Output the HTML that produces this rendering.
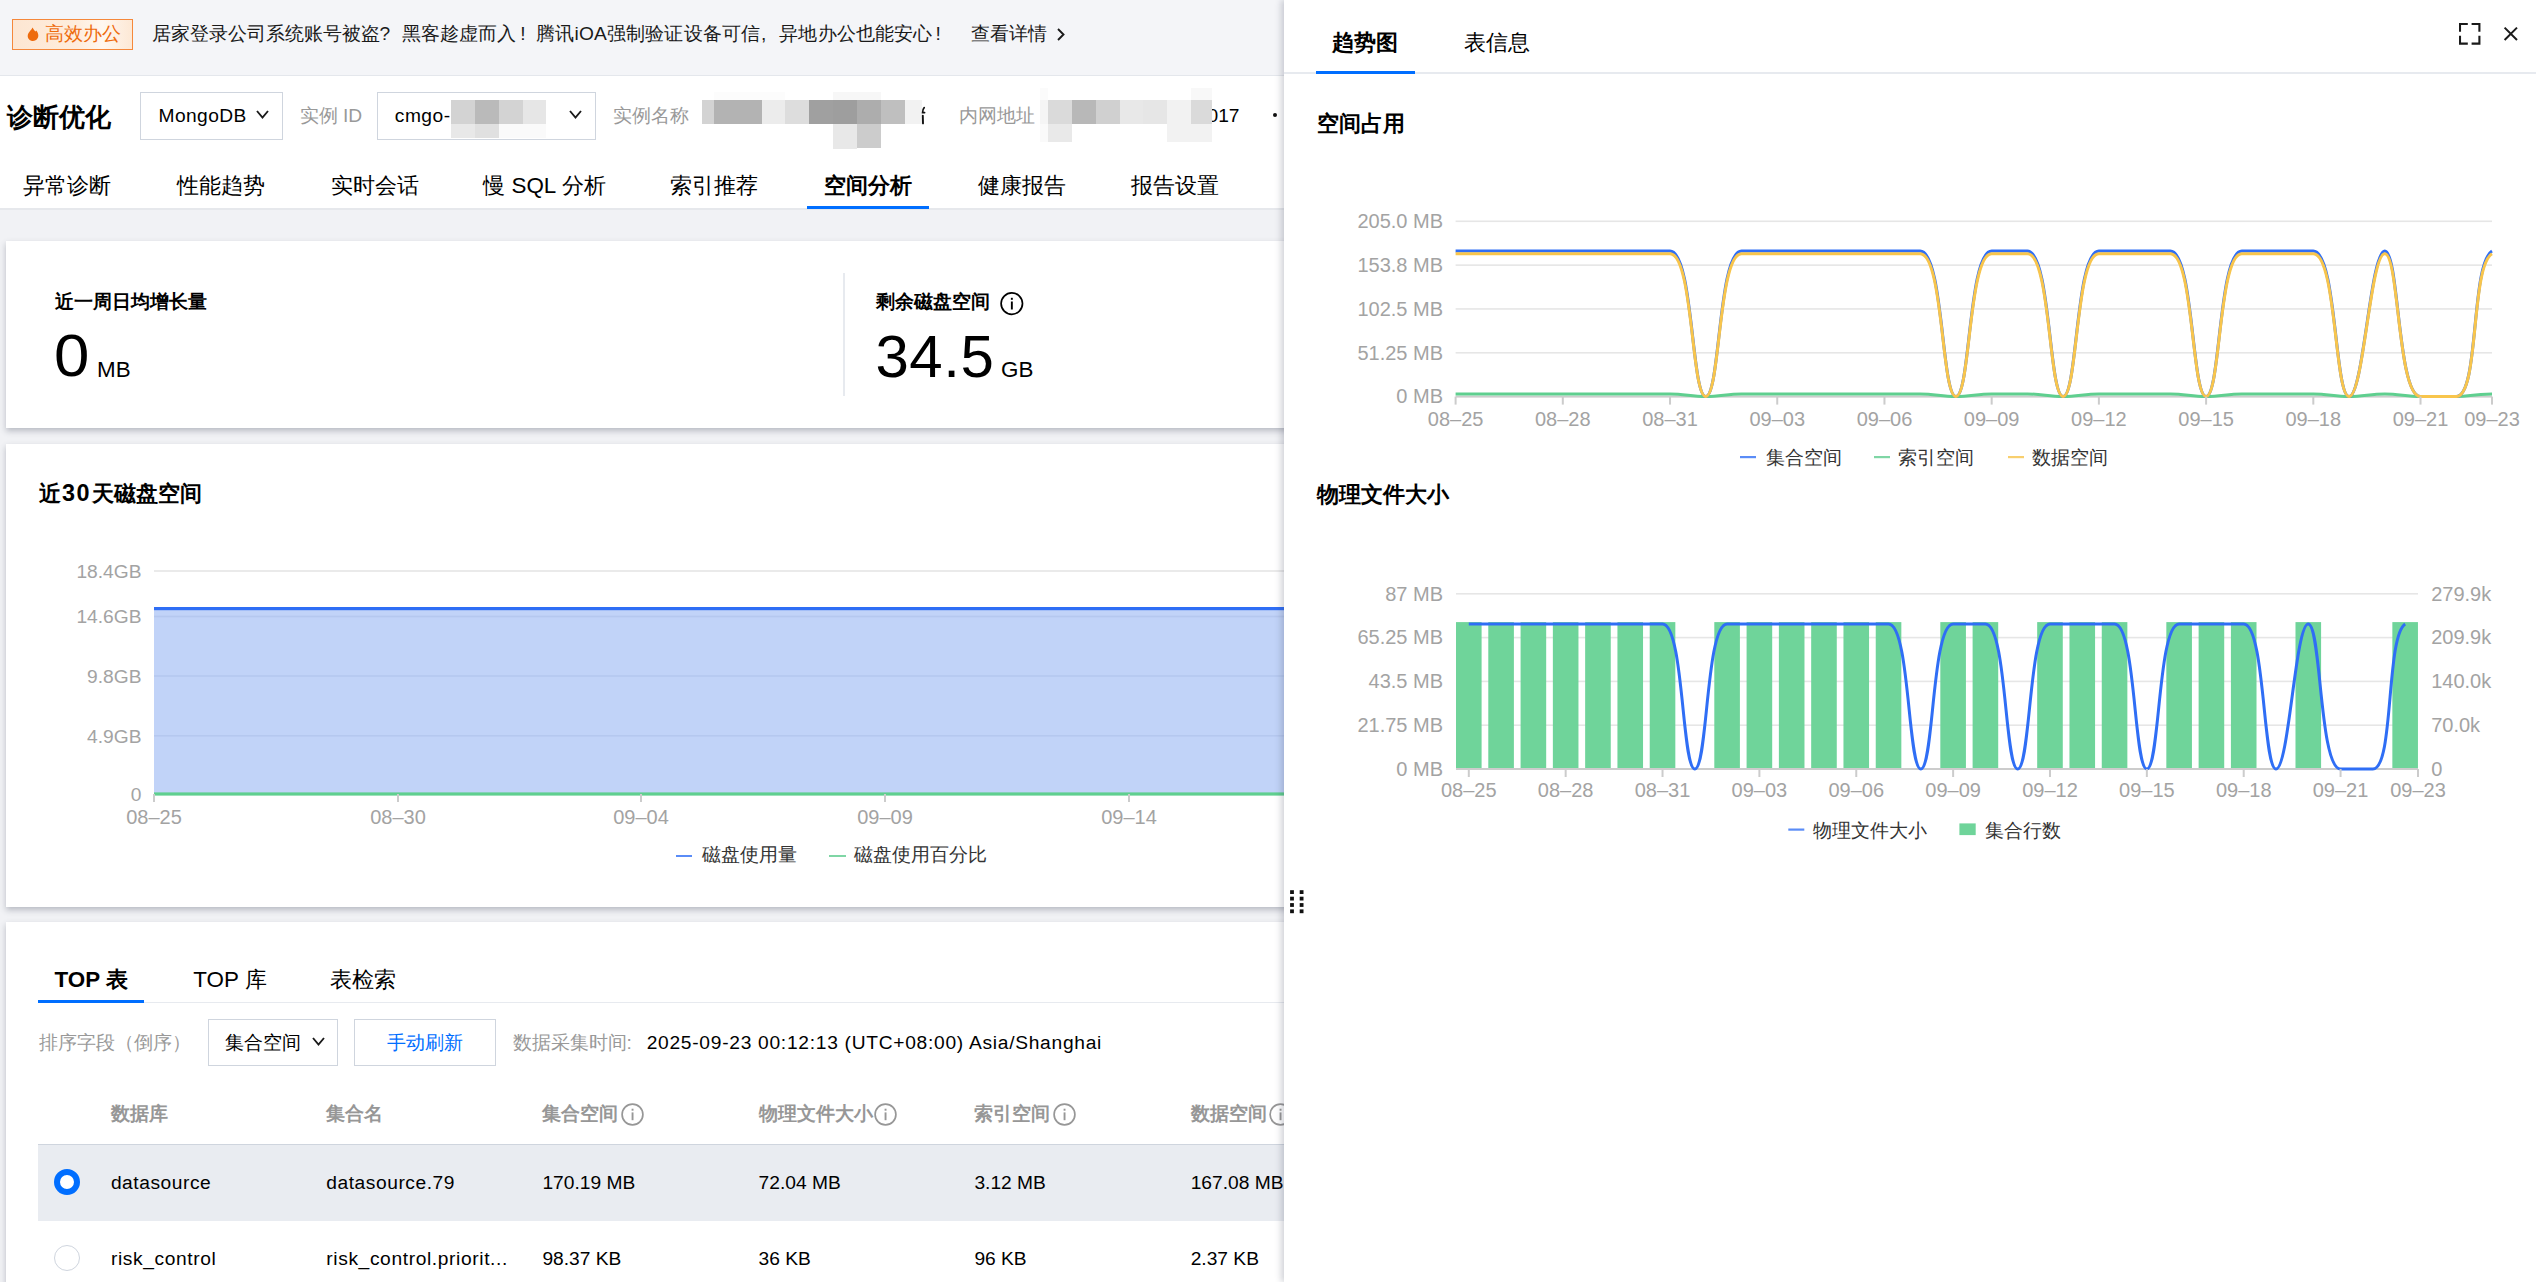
<!DOCTYPE html>
<html><head><meta charset="utf-8"><title>诊断优化</title>
<style>
html,body{margin:0;padding:0;width:2536px;height:1282px;overflow:hidden;background:#fff;font-family:"Liberation Sans", sans-serif;}
</style></head><body>
<div style="position:relative;width:2536px;height:1282px;overflow:hidden">
<div style="position:absolute;left:0;top:0;width:1290px;height:1282px;overflow:hidden;background:#f1f2f5">
<div style="position:absolute;left:0.00px;top:0.00px;width:1290.00px;height:75.00px;background:#f4f5f8"></div>
<div style="position:absolute;left:0.00px;top:74.50px;width:1290.00px;height:1.50px;background:#e4e7ec"></div>
<div style="position:absolute;left:12.00px;top:19.00px;width:121.00px;height:31.00px;box-sizing:border-box;border:1.6px solid #f5883b;background:linear-gradient(90deg,#fde6d2 0%,#feeddd 55%,#fff7f0 75%,#fde8d5 100%)"></div>
<svg style="position:absolute;left:26px;top:26px" width="14" height="16" viewBox="0 0 14 16"><path d="M6.5 1.4 C7.6 3.2 8.6 4.6 9.4 5.6 C9.8 5.2 10.1 4.8 10.3 4.4 C11.6 6 12.3 7.8 12.3 9.6 C12.3 12.8 10 15 7 15 C4 15 1.7 12.8 1.7 10 C1.7 7.6 3.2 6.2 4.4 4.6 C5.2 3.6 6 2.6 6.5 1.4 Z" fill="#ee6b0d"/></svg>
<div style="position:absolute;top:21.06px;line-height:26.88px;height:26.88px;font-size:19.20px;color:#ee6b0d;font-weight:400;white-space:nowrap;;left:45.00px;">高效办公</div>
<div style="position:absolute;top:21.06px;line-height:26.88px;height:26.88px;font-size:19.20px;color:#1a1a1a;font-weight:400;white-space:nowrap;;left:151.50px;">居家登录公司系统账号被盗?</div>
<div style="position:absolute;top:21.06px;line-height:26.88px;height:26.88px;font-size:19.20px;color:#1a1a1a;font-weight:400;white-space:nowrap;;left:402.30px;">黑客趁虚而入<span style="display:inline-block;width:19.2px;padding-left:4px;box-sizing:border-box">!</span></div>
<div style="position:absolute;top:21.06px;line-height:26.88px;height:26.88px;font-size:19.20px;color:#1a1a1a;font-weight:400;white-space:nowrap;letter-spacing:0.14px;left:536.30px;">腾讯iOA强制验证设备可信<span style="display:inline-block;width:19.2px;padding-left:1px;box-sizing:border-box">,</span>异地办公也能安心<span style="display:inline-block;width:19.2px;padding-left:3px;box-sizing:border-box">!</span></div>
<div style="position:absolute;top:21.06px;line-height:26.88px;height:26.88px;font-size:19.20px;color:#1a1a1a;font-weight:400;white-space:nowrap;;left:971.00px;">查看详情</div>
<svg style="position:absolute;left:1055px;top:27px" width="12" height="15" viewBox="0 0 12 15"><path d="M3 2 L8.5 7.5 L3 13" fill="none" stroke="#1a1a1a" stroke-width="1.9"/></svg>
<div style="position:absolute;left:0.00px;top:76.00px;width:1290.00px;height:132.00px;background:#fff"></div>
<div style="position:absolute;top:99.58px;line-height:35.84px;height:35.84px;font-size:25.60px;color:#000000;font-weight:700;white-space:nowrap;;left:7.00px;">诊断优化</div>
<div style="position:absolute;left:140.00px;top:92.00px;width:143.00px;height:48.00px;box-sizing:border-box;border:1.6px solid #cfd5de;background:#fff"></div>
<div style="position:absolute;top:102.56px;line-height:26.88px;height:26.88px;font-size:19.20px;color:#000000;font-weight:400;white-space:nowrap;letter-spacing:0.4px;left:158.60px;">MongoDB</div>
<svg style="position:absolute;left:256.00px;top:110.00px;overflow:visible" width="13" height="8"><path d="M1 1 L6.50 7.50 L12.00 1" fill="none" stroke="#1a1a1a" stroke-width="1.90"/></svg>
<div style="position:absolute;top:102.56px;line-height:26.88px;height:26.88px;font-size:19.20px;color:#999999;font-weight:400;white-space:nowrap;;left:299.60px;">实例 ID</div>
<div style="position:absolute;left:377.00px;top:92.00px;width:219.00px;height:48.00px;box-sizing:border-box;border:1.6px solid #cfd5de;background:#fff"></div>
<div style="position:absolute;top:102.56px;line-height:26.88px;height:26.88px;font-size:19.20px;color:#000000;font-weight:400;white-space:nowrap;letter-spacing:0.5px;left:394.80px;">cmgo-</div>
<div style="position:absolute;left:451.00px;top:100.00px;width:24.00px;height:24.00px;background:#d3d3d3"></div>
<div style="position:absolute;left:475.00px;top:100.00px;width:24.00px;height:24.00px;background:#bababa"></div>
<div style="position:absolute;left:499.00px;top:100.00px;width:24.00px;height:24.00px;background:#d3d3d3"></div>
<div style="position:absolute;left:523.00px;top:100.00px;width:23.00px;height:24.00px;background:#e6e6e6"></div>
<div style="position:absolute;left:451.00px;top:124.00px;width:24.00px;height:14.00px;background:#e8e8e8"></div>
<div style="position:absolute;left:475.00px;top:124.00px;width:24.00px;height:14.00px;background:#e0e0e0"></div>
<div style="position:absolute;left:499.00px;top:124.00px;width:47.00px;height:14.00px;background:#fafafa"></div>
<svg style="position:absolute;left:568.70px;top:110.00px;overflow:visible" width="13" height="8"><path d="M1 1 L6.50 7.50 L12.00 1" fill="none" stroke="#1a1a1a" stroke-width="1.90"/></svg>
<div style="position:absolute;top:102.56px;line-height:26.88px;height:26.88px;font-size:19.20px;color:#999999;font-weight:400;white-space:nowrap;;left:613.00px;">实例名称</div>
<div style="position:absolute;left:702.00px;top:100.00px;width:12.00px;height:24.00px;background:#d3d3d3"></div>
<div style="position:absolute;left:714.00px;top:100.00px;width:48.00px;height:24.00px;background:#b3b3b3"></div>
<div style="position:absolute;left:762.00px;top:100.00px;width:23.00px;height:24.00px;background:#ececec"></div>
<div style="position:absolute;left:785.00px;top:100.00px;width:24.00px;height:24.00px;background:#dddddd"></div>
<div style="position:absolute;left:809.00px;top:100.00px;width:24.00px;height:24.00px;background:#a0a0a0"></div>
<div style="position:absolute;left:833.00px;top:100.00px;width:24.00px;height:24.00px;background:#9e9e9e"></div>
<div style="position:absolute;left:857.00px;top:100.00px;width:24.00px;height:24.00px;background:#adadad"></div>
<div style="position:absolute;left:881.00px;top:100.00px;width:24.00px;height:24.00px;background:#bfbfbf"></div>
<div style="position:absolute;left:905.00px;top:100.00px;width:17.00px;height:24.00px;background:#f2f2f2"></div>
<div style="position:absolute;left:833.00px;top:124.00px;width:24.00px;height:25.00px;background:#e8e8e8"></div>
<div style="position:absolute;left:857.00px;top:124.00px;width:24.00px;height:24.00px;background:#cccccc"></div>
<div style="position:absolute;left:833.00px;top:92.00px;width:48.00px;height:8.00px;background:#f7f7f7"></div>
<div style="position:absolute;left:714.00px;top:92.00px;width:71.00px;height:8.00px;background:#fcfcfc"></div>
<svg style="position:absolute;left:918px;top:104px;overflow:visible" width="10" height="24"><path d="M6.2 3.6 C5 4.8 4.6 6.4 4.6 8.6 L6.6 8.6" fill="none" stroke="#111" stroke-width="1.7" stroke-linecap="round"/><path d="M4.8 11.6 L5 19.4" fill="none" stroke="#111" stroke-width="1.9" stroke-linecap="round"/></svg>
<div style="position:absolute;top:102.56px;line-height:26.88px;height:26.88px;font-size:19.20px;color:#999999;font-weight:400;white-space:nowrap;;left:958.60px;">内网地址</div>
<div style="position:absolute;top:102.56px;line-height:26.88px;height:26.88px;font-size:19.20px;color:#000000;font-weight:400;white-space:nowrap;;left:1207.50px;">017</div>
<div style="position:absolute;left:1040.00px;top:100.00px;width:8.00px;height:24.00px;background:#f5f5f5"></div>
<div style="position:absolute;left:1048.00px;top:100.00px;width:24.00px;height:24.00px;background:#dadada"></div>
<div style="position:absolute;left:1072.00px;top:100.00px;width:24.00px;height:24.00px;background:#b8b8b8"></div>
<div style="position:absolute;left:1096.00px;top:100.00px;width:24.00px;height:24.00px;background:#d0d0d0"></div>
<div style="position:absolute;left:1120.00px;top:100.00px;width:23.00px;height:24.00px;background:#e8e8e8"></div>
<div style="position:absolute;left:1143.00px;top:100.00px;width:24.00px;height:24.00px;background:#e6e6e6"></div>
<div style="position:absolute;left:1167.00px;top:100.00px;width:24.00px;height:24.00px;background:#f2f2f2"></div>
<div style="position:absolute;left:1191.00px;top:100.00px;width:21.00px;height:24.00px;background:#dadada"></div>
<div style="position:absolute;left:1048.00px;top:124.00px;width:24.00px;height:18.00px;background:#e9e9e9"></div>
<div style="position:absolute;left:1167.00px;top:124.00px;width:45.00px;height:18.00px;background:#f2f2f2"></div>
<div style="position:absolute;left:1040.00px;top:124.00px;width:8.00px;height:18.00px;background:#fafafa"></div>
<div style="position:absolute;left:1191.00px;top:88.00px;width:21.00px;height:12.00px;background:#f8f8f8"></div>
<div style="position:absolute;left:1040.00px;top:88.00px;width:8.00px;height:12.00px;background:#fbfbfb"></div>
<div style="position:absolute;left:1273.00px;top:113.40px;width:4.00px;height:4.00px;background:#111;border-radius:50%"></div>
<div style="position:absolute;top:169.82px;line-height:31.36px;height:31.36px;font-size:22.40px;color:#000000;font-weight:400;white-space:nowrap;;left:22.70px;">异常诊断</div>
<div style="position:absolute;top:169.82px;line-height:31.36px;height:31.36px;font-size:22.40px;color:#000000;font-weight:400;white-space:nowrap;;left:176.70px;">性能趋势</div>
<div style="position:absolute;top:169.82px;line-height:31.36px;height:31.36px;font-size:22.40px;color:#000000;font-weight:400;white-space:nowrap;;left:330.60px;">实时会话</div>
<div style="position:absolute;top:169.82px;line-height:31.36px;height:31.36px;font-size:22.40px;color:#000000;font-weight:400;white-space:nowrap;;left:483.30px;">慢 SQL 分析</div>
<div style="position:absolute;top:169.82px;line-height:31.36px;height:31.36px;font-size:22.40px;color:#000000;font-weight:400;white-space:nowrap;;left:670.40px;">索引推荐</div>
<div style="position:absolute;top:169.82px;line-height:31.36px;height:31.36px;font-size:22.40px;color:#000000;font-weight:600;white-space:nowrap;;left:823.60px;">空间分析</div>
<div style="position:absolute;top:169.82px;line-height:31.36px;height:31.36px;font-size:22.40px;color:#000000;font-weight:400;white-space:nowrap;;left:977.60px;">健康报告</div>
<div style="position:absolute;top:169.82px;line-height:31.36px;height:31.36px;font-size:22.40px;color:#000000;font-weight:400;white-space:nowrap;;left:1131.00px;">报告设置</div>
<div style="position:absolute;left:0.00px;top:208.00px;width:1290.00px;height:2.00px;background:#e6e8ec"></div>
<div style="position:absolute;left:807.00px;top:206.00px;width:122.00px;height:3.00px;background:#006eff"></div>
<div style="position:absolute;left:6.00px;top:241.00px;width:1294.00px;height:187.00px;background:#fff;box-shadow:0 3px 6px rgba(54,58,80,0.30)"></div>
<div style="position:absolute;top:289.06px;line-height:26.88px;height:26.88px;font-size:19.20px;color:#000000;font-weight:700;white-space:nowrap;;left:55.00px;">近一周日均增长量</div>
<div style="position:absolute;left:53.5px;top:320.80px;font-size:60px;line-height:70px;height:70px;color:#000;white-space:nowrap;transform:scaleX(1.06);transform-origin:0 0">0</div>
<div style="position:absolute;top:353.82px;line-height:31.36px;height:31.36px;font-size:22.40px;color:#000000;font-weight:400;white-space:nowrap;;left:97.00px;">MB</div>
<div style="position:absolute;left:843.00px;top:273.00px;width:2.00px;height:123.00px;background:#e7eaef"></div>
<div style="position:absolute;top:289.06px;line-height:26.88px;height:26.88px;font-size:19.20px;color:#000000;font-weight:700;white-space:nowrap;;left:876.00px;">剩余磁盘空间</div>
<svg style="position:absolute;left:999px;top:291px" width="26" height="26" viewBox="0 0 26 26"><circle cx="12.8" cy="12.6" r="10.7" fill="none" stroke="#000" stroke-width="1.7"/><rect x="11.9" y="10.5" width="1.9" height="8" fill="#000"/><rect x="11.9" y="6.8" width="1.9" height="2" fill="#000"/></svg>
<div style="position:absolute;left:875.5px;top:321.80px;font-size:60px;line-height:70px;height:70px;color:#000;white-space:nowrap;letter-spacing:0.5px">34.5</div>
<div style="position:absolute;top:354.32px;line-height:31.36px;height:31.36px;font-size:22.40px;color:#000000;font-weight:400;white-space:nowrap;;left:1001.00px;">GB</div>
<div style="position:absolute;left:6.00px;top:443.50px;width:1294.00px;height:463.00px;background:#fff;box-shadow:0 3px 6px rgba(54,58,80,0.30)"></div>
<div style="position:absolute;top:478.02px;line-height:31.36px;height:31.36px;font-size:22.40px;color:#000000;font-weight:700;white-space:nowrap;;left:39.00px;">近<span style="font-size:23.4px;letter-spacing:1.4px;margin-left:1px;margin-right:1.6px">30</span>天磁盘空间</div>
<svg style="position:absolute;left:0;top:0" width="1290" height="1282"><rect x="154" y="570.2" width="1140" height="1.6" fill="#e5e5e5"/><rect x="154" y="608.5" width="1140" height="185.5" fill="#c1d3f8"/><rect x="154" y="615.70" width="1140" height="1.6" fill="#203c80" fill-opacity="0.07"/><rect x="154" y="675.20" width="1140" height="1.6" fill="#203c80" fill-opacity="0.07"/><rect x="154" y="735.00" width="1140" height="1.6" fill="#203c80" fill-opacity="0.07"/><rect x="154" y="607" width="1140" height="3.2" fill="#2f6ef5"/><rect x="154" y="792.4" width="1140" height="3.2" fill="#5fcf8f"/><rect x="153.00" y="794" width="2" height="8" fill="#cccccc"/><rect x="397.00" y="794" width="2" height="8" fill="#cccccc"/><rect x="640.00" y="794" width="2" height="8" fill="#cccccc"/><rect x="884.00" y="794" width="2" height="8" fill="#cccccc"/><rect x="1128.00" y="794" width="2" height="8" fill="#cccccc"/><text x="141.50" y="577.82" font-size="19.20" fill="#a3a3a3" text-anchor="end" font-weight="400" font-family='&quot;Liberation Sans&quot;, sans-serif'>18.4GB</text><text x="141.50" y="623.32" font-size="19.20" fill="#a3a3a3" text-anchor="end" font-weight="400" font-family='&quot;Liberation Sans&quot;, sans-serif'>14.6GB</text><text x="141.50" y="682.82" font-size="19.20" fill="#a3a3a3" text-anchor="end" font-weight="400" font-family='&quot;Liberation Sans&quot;, sans-serif'>9.8GB</text><text x="141.50" y="742.62" font-size="19.20" fill="#a3a3a3" text-anchor="end" font-weight="400" font-family='&quot;Liberation Sans&quot;, sans-serif'>4.9GB</text><text x="141.50" y="800.82" font-size="19.20" fill="#a3a3a3" text-anchor="end" font-weight="400" font-family='&quot;Liberation Sans&quot;, sans-serif'>0</text><text x="154.00" y="823.80" font-size="20.00" fill="#a3a3a3" text-anchor="middle" font-weight="400" font-family='&quot;Liberation Sans&quot;, sans-serif'>08–25</text><text x="398.00" y="823.80" font-size="20.00" fill="#a3a3a3" text-anchor="middle" font-weight="400" font-family='&quot;Liberation Sans&quot;, sans-serif'>08–30</text><text x="641.00" y="823.80" font-size="20.00" fill="#a3a3a3" text-anchor="middle" font-weight="400" font-family='&quot;Liberation Sans&quot;, sans-serif'>09–04</text><text x="885.00" y="823.80" font-size="20.00" fill="#a3a3a3" text-anchor="middle" font-weight="400" font-family='&quot;Liberation Sans&quot;, sans-serif'>09–09</text><text x="1129.00" y="823.80" font-size="20.00" fill="#a3a3a3" text-anchor="middle" font-weight="400" font-family='&quot;Liberation Sans&quot;, sans-serif'>09–14</text></svg>
<div style="position:absolute;left:675.60px;top:854.50px;width:16.80px;height:2.20px;background:#5a8cf7"></div>
<div style="position:absolute;top:842.06px;line-height:26.88px;height:26.88px;font-size:19.20px;color:#333;font-weight:400;white-space:nowrap;;left:702.00px;">磁盘使用量</div>
<div style="position:absolute;left:829.00px;top:854.50px;width:17.00px;height:2.20px;background:#7fd6a5"></div>
<div style="position:absolute;top:842.06px;line-height:26.88px;height:26.88px;font-size:19.20px;color:#333;font-weight:400;white-space:nowrap;;left:854.00px;">磁盘使用百分比</div>
<div style="position:absolute;left:6.00px;top:922.00px;width:1294.00px;height:478.00px;background:#fff;box-shadow:0 3px 6px rgba(54,58,80,0.30)"></div>
<div style="position:absolute;top:964.32px;line-height:31.36px;height:31.36px;font-size:22.40px;color:#000000;font-weight:700;white-space:nowrap;;left:54.60px;">TOP 表</div>
<div style="position:absolute;top:964.32px;line-height:31.36px;height:31.36px;font-size:22.40px;color:#000000;font-weight:400;white-space:nowrap;;left:193.20px;">TOP 库</div>
<div style="position:absolute;top:964.32px;line-height:31.36px;height:31.36px;font-size:22.40px;color:#000000;font-weight:400;white-space:nowrap;;left:329.70px;">表检索</div>
<div style="position:absolute;left:38.00px;top:1001.50px;width:1252.00px;height:1.60px;background:#e7eaef"></div>
<div style="position:absolute;left:38.00px;top:999.70px;width:106.00px;height:3.10px;background:#006eff"></div>
<div style="position:absolute;top:1029.56px;line-height:26.88px;height:26.88px;font-size:19.20px;color:#999999;font-weight:400;white-space:nowrap;;left:38.90px;">排序字段（倒序）</div>
<div style="position:absolute;left:208.00px;top:1019.00px;width:129.60px;height:47.30px;box-sizing:border-box;border:1.6px solid #cfd5de;background:#fff"></div>
<div style="position:absolute;top:1029.56px;line-height:26.88px;height:26.88px;font-size:19.20px;color:#000000;font-weight:400;white-space:nowrap;;left:225.00px;">集合空间</div>
<svg style="position:absolute;left:311.50px;top:1037.00px;overflow:visible" width="13" height="8"><path d="M1 1 L6.50 7.50 L12.00 1" fill="none" stroke="#1a1a1a" stroke-width="1.90"/></svg>
<div style="position:absolute;left:354.30px;top:1019.00px;width:141.40px;height:47.30px;box-sizing:border-box;border:1.6px solid #cfd5de;background:#fff"></div>
<div style="position:absolute;top:1029.56px;line-height:26.88px;height:26.88px;font-size:19.20px;color:#006eff;font-weight:400;white-space:nowrap;;left:387.30px;">手动刷新</div>
<div style="position:absolute;top:1029.56px;line-height:26.88px;height:26.88px;font-size:19.20px;color:#999999;font-weight:400;white-space:nowrap;;left:512.60px;">数据采集时间<span style="display:inline-block;width:19.2px">:</span></div>
<div style="position:absolute;top:1029.56px;line-height:26.88px;height:26.88px;font-size:19.20px;color:#000000;font-weight:400;white-space:nowrap;letter-spacing:0.72px;left:646.70px;">2025-09-23 00:12:13 (UTC+08:00) Asia/Shanghai</div>
<div style="position:absolute;top:1101.06px;line-height:26.88px;height:26.88px;font-size:19.20px;color:#979797;font-weight:700;white-space:nowrap;;left:110.90px;">数据库</div>
<div style="position:absolute;top:1101.06px;line-height:26.88px;height:26.88px;font-size:19.20px;color:#979797;font-weight:700;white-space:nowrap;;left:326.30px;">集合名</div>
<div style="position:absolute;top:1101.06px;line-height:26.88px;height:26.88px;font-size:19.20px;color:#979797;font-weight:700;white-space:nowrap;;left:542.40px;">集合空间</div>
<svg style="position:absolute;left:620.20px;top:1101.50px" width="26" height="26" viewBox="0 0 26 26"><circle cx="12.5" cy="12.5" r="10.4" fill="none" stroke="#979797" stroke-width="1.7"/><rect x="11.6" y="10.4" width="1.9" height="7.8" fill="#979797"/><rect x="11.6" y="6.7" width="1.9" height="2" fill="#979797"/></svg>
<div style="position:absolute;top:1101.06px;line-height:26.88px;height:26.88px;font-size:19.20px;color:#979797;font-weight:700;white-space:nowrap;;left:758.60px;">物理文件大小</div>
<svg style="position:absolute;left:873.20px;top:1101.50px" width="26" height="26" viewBox="0 0 26 26"><circle cx="12.5" cy="12.5" r="10.4" fill="none" stroke="#979797" stroke-width="1.7"/><rect x="11.6" y="10.4" width="1.9" height="7.8" fill="#979797"/><rect x="11.6" y="6.7" width="1.9" height="2" fill="#979797"/></svg>
<div style="position:absolute;top:1101.06px;line-height:26.88px;height:26.88px;font-size:19.20px;color:#979797;font-weight:700;white-space:nowrap;;left:974.40px;">索引空间</div>
<svg style="position:absolute;left:1051.70px;top:1101.50px" width="26" height="26" viewBox="0 0 26 26"><circle cx="12.5" cy="12.5" r="10.4" fill="none" stroke="#979797" stroke-width="1.7"/><rect x="11.6" y="10.4" width="1.9" height="7.8" fill="#979797"/><rect x="11.6" y="6.7" width="1.9" height="2" fill="#979797"/></svg>
<div style="position:absolute;top:1101.06px;line-height:26.88px;height:26.88px;font-size:19.20px;color:#979797;font-weight:700;white-space:nowrap;;left:1190.70px;">数据空间</div>
<svg style="position:absolute;left:1268.20px;top:1101.50px" width="26" height="26" viewBox="0 0 26 26"><circle cx="12.5" cy="12.5" r="10.4" fill="none" stroke="#979797" stroke-width="1.7"/><rect x="11.6" y="10.4" width="1.9" height="7.8" fill="#979797"/><rect x="11.6" y="6.7" width="1.9" height="2" fill="#979797"/></svg>
<div style="position:absolute;left:38.00px;top:1143.50px;width:1252.00px;height:1.60px;background:#cfd5de"></div>
<div style="position:absolute;left:38.00px;top:1145.10px;width:1252.00px;height:75.50px;background:#e9ecf1"></div>
<div style="position:absolute;left:54.1px;top:1169px;width:26px;height:26px;box-sizing:border-box;border-radius:50%;border:6.2px solid #006eff;background:#fff"></div>
<div style="position:absolute;left:54px;top:1245px;width:26px;height:26px;box-sizing:border-box;border-radius:50%;border:1.6px solid #cfd5de;background:#fff"></div>
<div style="position:absolute;top:1170.06px;line-height:26.88px;height:26.88px;font-size:19.20px;color:#000000;font-weight:400;white-space:nowrap;letter-spacing:0.55px;left:110.90px;">datasource</div>
<div style="position:absolute;top:1170.06px;line-height:26.88px;height:26.88px;font-size:19.20px;color:#000000;font-weight:400;white-space:nowrap;letter-spacing:0.55px;left:326.30px;">datasource.79</div>
<div style="position:absolute;top:1170.06px;line-height:26.88px;height:26.88px;font-size:19.20px;color:#000000;font-weight:400;white-space:nowrap;;left:542.40px;">170.19 MB</div>
<div style="position:absolute;top:1170.06px;line-height:26.88px;height:26.88px;font-size:19.20px;color:#000000;font-weight:400;white-space:nowrap;;left:758.60px;">72.04 MB</div>
<div style="position:absolute;top:1170.06px;line-height:26.88px;height:26.88px;font-size:19.20px;color:#000000;font-weight:400;white-space:nowrap;;left:974.40px;">3.12 MB</div>
<div style="position:absolute;top:1170.06px;line-height:26.88px;height:26.88px;font-size:19.20px;color:#000000;font-weight:400;white-space:nowrap;;left:1190.70px;">167.08 MB</div>
<div style="position:absolute;top:1246.06px;line-height:26.88px;height:26.88px;font-size:19.20px;color:#000000;font-weight:400;white-space:nowrap;letter-spacing:0.62px;left:110.90px;">risk_control</div>
<div style="position:absolute;top:1246.06px;line-height:26.88px;height:26.88px;font-size:19.20px;color:#000000;font-weight:400;white-space:nowrap;letter-spacing:0.62px;left:326.30px;">risk_control.priorit...</div>
<div style="position:absolute;top:1246.06px;line-height:26.88px;height:26.88px;font-size:19.20px;color:#000000;font-weight:400;white-space:nowrap;;left:542.40px;">98.37 KB</div>
<div style="position:absolute;top:1246.06px;line-height:26.88px;height:26.88px;font-size:19.20px;color:#000000;font-weight:400;white-space:nowrap;;left:758.60px;">36 KB</div>
<div style="position:absolute;top:1246.06px;line-height:26.88px;height:26.88px;font-size:19.20px;color:#000000;font-weight:400;white-space:nowrap;;left:974.40px;">96 KB</div>
<div style="position:absolute;top:1246.06px;line-height:26.88px;height:26.88px;font-size:19.20px;color:#000000;font-weight:400;white-space:nowrap;;left:1190.70px;">2.37 KB</div>
</div>
<div style="position:absolute;left:1284px;top:0;width:1252px;height:1282px;background:#fff;box-shadow:-3px 0 6px rgba(54,58,80,0.22)">
</div>
<div style="position:absolute;top:26.82px;line-height:31.36px;height:31.36px;font-size:22.40px;color:#000000;font-weight:700;white-space:nowrap;;left:1332.00px;">趋势图</div>
<div style="position:absolute;top:26.82px;line-height:31.36px;height:31.36px;font-size:22.40px;color:#000000;font-weight:400;white-space:nowrap;;left:1463.80px;">表信息</div>
<div style="position:absolute;left:1284.00px;top:72.40px;width:1252.00px;height:1.60px;background:#e7eaef"></div>
<div style="position:absolute;left:1316.00px;top:70.80px;width:98.80px;height:3.00px;background:#006eff"></div>
<svg style="position:absolute;left:2459px;top:23px" width="22" height="22" viewBox="0 0 22 22"><path d="M1 8.8 V1 H8.8 M12.6 1 H20.4 V8.8 M20.4 12.8 V20.6 H12.6 M8.8 20.6 H1 V12.8" fill="none" stroke="#1a1a1a" stroke-width="2.1"/></svg>
<svg style="position:absolute;left:2503px;top:26px" width="16" height="16" viewBox="0 0 16 16"><path d="M1.6 1.6 L14 14 M14 1.6 L1.6 14" fill="none" stroke="#1a1a1a" stroke-width="2"/></svg>
<div style="position:absolute;top:107.82px;line-height:31.36px;height:31.36px;font-size:22.40px;color:#000000;font-weight:700;white-space:nowrap;;left:1316.70px;">空间占用</div>
<div style="position:absolute;top:479.12px;line-height:31.36px;height:31.36px;font-size:22.40px;color:#000000;font-weight:700;white-space:nowrap;;left:1316.80px;">物理文件大小</div>
<svg style="position:absolute;left:0;top:0" width="2536" height="1282"><rect x="1455.60" y="220.50" width="1036.40" height="1.6" fill="#e6e6e6"/><rect x="1455.60" y="264.32" width="1036.40" height="1.6" fill="#e6e6e6"/><rect x="1455.60" y="308.15" width="1036.40" height="1.6" fill="#e6e6e6"/><rect x="1455.60" y="351.98" width="1036.40" height="1.6" fill="#e6e6e6"/><rect x="1455.60" y="395.60" width="1036.40" height="2" fill="#cccccc"/><path d="M1455.60 393.93 C1455.60 393.93 1477.04 393.93 1491.34 393.93 C1505.63 393.93 1512.78 393.93 1527.08 393.93 C1541.37 393.93 1548.52 393.93 1562.81 393.93 C1577.11 393.93 1584.26 393.93 1598.55 393.93 C1612.85 393.93 1619.99 393.93 1634.29 393.93 C1648.58 393.93 1655.75 393.93 1670.03 393.93 C1684.34 393.93 1691.47 396.60 1705.77 396.60 C1720.06 396.60 1727.19 393.93 1741.50 393.93 C1755.78 393.93 1762.95 393.93 1777.24 393.93 C1791.54 393.93 1798.68 393.93 1812.98 393.93 C1827.27 393.93 1834.42 393.93 1848.72 393.93 C1863.01 393.93 1870.16 393.93 1884.46 393.93 C1898.75 393.93 1905.92 393.93 1920.19 393.93 C1934.51 393.93 1941.64 396.60 1955.93 396.60 C1970.23 396.60 1977.35 393.93 1991.67 393.93 C2005.94 393.93 2013.13 393.93 2027.41 393.93 C2041.72 393.93 2048.85 396.60 2063.14 396.60 C2077.44 396.60 2084.57 393.93 2098.88 393.93 C2113.16 393.93 2120.33 393.93 2134.62 393.93 C2148.92 393.93 2156.08 393.93 2170.36 393.93 C2184.67 393.93 2191.80 396.60 2206.10 396.60 C2220.39 396.60 2227.52 393.93 2241.83 393.93 C2256.11 393.93 2263.28 393.93 2277.57 393.93 C2291.87 393.93 2299.04 393.93 2313.31 393.93 C2327.63 393.93 2334.75 396.60 2349.05 396.60 C2363.34 396.60 2370.49 393.93 2384.79 393.93 C2399.08 393.93 2406.21 396.60 2420.52 396.60 C2434.80 396.60 2441.99 396.60 2456.26 396.60 C2470.58 396.60 2470.56 394.17 2492.00 393.93" fill="none" stroke="#5fcf8f" stroke-width="3" stroke-linejoin="round"/><path d="M1455.60 251.07 C1455.60 251.07 1477.04 251.07 1491.34 251.07 C1505.63 251.07 1512.78 251.07 1527.08 251.07 C1541.37 251.07 1548.52 251.07 1562.81 251.07 C1577.11 251.07 1584.26 251.07 1598.55 251.07 C1612.85 251.07 1619.99 251.07 1634.29 251.07 C1648.58 251.07 1664.52 251.07 1670.03 251.07 C1693.11 251.07 1691.47 396.60 1705.77 396.60 C1720.06 396.60 1718.42 251.07 1741.50 251.07 C1747.01 251.07 1762.95 251.07 1777.24 251.07 C1791.54 251.07 1798.68 251.07 1812.98 251.07 C1827.27 251.07 1834.42 251.07 1848.72 251.07 C1863.01 251.07 1870.16 251.07 1884.46 251.07 C1898.75 251.07 1914.69 251.07 1920.19 251.07 C1943.28 251.07 1941.64 396.60 1955.93 396.60 C1970.23 396.60 1968.58 251.07 1991.67 251.07 C1997.17 251.07 2021.90 251.07 2027.41 251.07 C2050.49 251.07 2048.85 396.60 2063.14 396.60 C2077.44 396.60 2075.80 251.07 2098.88 251.07 C2104.39 251.07 2120.33 251.07 2134.62 251.07 C2148.92 251.07 2164.85 251.07 2170.36 251.07 C2193.44 251.07 2191.80 396.60 2206.10 396.60 C2220.39 396.60 2218.75 251.07 2241.83 251.07 C2247.34 251.07 2263.28 251.07 2277.57 251.07 C2291.87 251.07 2307.81 251.07 2313.31 251.07 C2336.40 251.07 2334.75 396.60 2349.05 396.60 C2363.34 396.60 2370.49 251.07 2384.79 251.07 C2399.08 251.07 2397.44 396.60 2420.52 396.60 C2426.03 396.60 2450.76 396.60 2456.26 396.60 C2479.35 396.60 2470.56 264.16 2492.00 251.07" fill="none" stroke="#2f6ef5" stroke-width="3" stroke-linejoin="round"/><path d="M1455.60 253.73 C1455.60 253.73 1477.04 253.73 1491.34 253.73 C1505.63 253.73 1512.78 253.73 1527.08 253.73 C1541.37 253.73 1548.52 253.73 1562.81 253.73 C1577.11 253.73 1584.26 253.73 1598.55 253.73 C1612.85 253.73 1619.99 253.73 1634.29 253.73 C1648.58 253.73 1664.44 253.73 1670.03 253.73 C1693.03 253.73 1691.47 396.60 1705.77 396.60 C1720.06 396.60 1718.50 253.73 1741.50 253.73 C1747.09 253.73 1762.95 253.73 1777.24 253.73 C1791.54 253.73 1798.68 253.73 1812.98 253.73 C1827.27 253.73 1834.42 253.73 1848.72 253.73 C1863.01 253.73 1870.16 253.73 1884.46 253.73 C1898.75 253.73 1914.61 253.73 1920.19 253.73 C1943.20 253.73 1941.64 396.60 1955.93 396.60 C1970.23 396.60 1968.66 253.73 1991.67 253.73 C1997.25 253.73 2021.82 253.73 2027.41 253.73 C2050.41 253.73 2048.85 396.60 2063.14 396.60 C2077.44 396.60 2075.88 253.73 2098.88 253.73 C2104.47 253.73 2120.33 253.73 2134.62 253.73 C2148.92 253.73 2164.78 253.73 2170.36 253.73 C2193.37 253.73 2191.80 396.60 2206.10 396.60 C2220.39 396.60 2218.83 253.73 2241.83 253.73 C2247.42 253.73 2263.28 253.73 2277.57 253.73 C2291.87 253.73 2307.73 253.73 2313.31 253.73 C2336.32 253.73 2334.75 396.60 2349.05 396.60 C2363.34 396.60 2370.49 253.73 2384.79 253.73 C2399.08 253.73 2397.52 396.60 2420.52 396.60 C2426.11 396.60 2450.68 396.60 2456.26 396.60 C2479.27 396.60 2470.56 266.58 2492.00 253.73" fill="none" stroke="#f8c54c" stroke-width="3" stroke-linejoin="round"/><rect x="1454.60" y="396.60" width="2" height="8" fill="#cccccc"/><text x="1455.60" y="426.10" font-size="20.00" fill="#a3a3a3" text-anchor="middle" font-weight="400" font-family='&quot;Liberation Sans&quot;, sans-serif'>08–25</text><rect x="1561.81" y="396.60" width="2" height="8" fill="#cccccc"/><text x="1562.81" y="426.10" font-size="20.00" fill="#a3a3a3" text-anchor="middle" font-weight="400" font-family='&quot;Liberation Sans&quot;, sans-serif'>08–28</text><rect x="1669.03" y="396.60" width="2" height="8" fill="#cccccc"/><text x="1670.03" y="426.10" font-size="20.00" fill="#a3a3a3" text-anchor="middle" font-weight="400" font-family='&quot;Liberation Sans&quot;, sans-serif'>08–31</text><rect x="1776.24" y="396.60" width="2" height="8" fill="#cccccc"/><text x="1777.24" y="426.10" font-size="20.00" fill="#a3a3a3" text-anchor="middle" font-weight="400" font-family='&quot;Liberation Sans&quot;, sans-serif'>09–03</text><rect x="1883.46" y="396.60" width="2" height="8" fill="#cccccc"/><text x="1884.46" y="426.10" font-size="20.00" fill="#a3a3a3" text-anchor="middle" font-weight="400" font-family='&quot;Liberation Sans&quot;, sans-serif'>09–06</text><rect x="1990.67" y="396.60" width="2" height="8" fill="#cccccc"/><text x="1991.67" y="426.10" font-size="20.00" fill="#a3a3a3" text-anchor="middle" font-weight="400" font-family='&quot;Liberation Sans&quot;, sans-serif'>09–09</text><rect x="2097.88" y="396.60" width="2" height="8" fill="#cccccc"/><text x="2098.88" y="426.10" font-size="20.00" fill="#a3a3a3" text-anchor="middle" font-weight="400" font-family='&quot;Liberation Sans&quot;, sans-serif'>09–12</text><rect x="2205.10" y="396.60" width="2" height="8" fill="#cccccc"/><text x="2206.10" y="426.10" font-size="20.00" fill="#a3a3a3" text-anchor="middle" font-weight="400" font-family='&quot;Liberation Sans&quot;, sans-serif'>09–15</text><rect x="2312.31" y="396.60" width="2" height="8" fill="#cccccc"/><text x="2313.31" y="426.10" font-size="20.00" fill="#a3a3a3" text-anchor="middle" font-weight="400" font-family='&quot;Liberation Sans&quot;, sans-serif'>09–18</text><rect x="2419.52" y="396.60" width="2" height="8" fill="#cccccc"/><text x="2420.52" y="426.10" font-size="20.00" fill="#a3a3a3" text-anchor="middle" font-weight="400" font-family='&quot;Liberation Sans&quot;, sans-serif'>09–21</text><rect x="2491.00" y="396.60" width="2" height="8" fill="#cccccc"/><text x="2492.00" y="426.10" font-size="20.00" fill="#a3a3a3" text-anchor="middle" font-weight="400" font-family='&quot;Liberation Sans&quot;, sans-serif'>09–23</text><text x="1443.00" y="228.10" font-size="20.00" fill="#a3a3a3" text-anchor="end" font-weight="400" font-family='&quot;Liberation Sans&quot;, sans-serif'>205.0 MB</text><text x="1443.00" y="271.93" font-size="20.00" fill="#a3a3a3" text-anchor="end" font-weight="400" font-family='&quot;Liberation Sans&quot;, sans-serif'>153.8 MB</text><text x="1443.00" y="315.75" font-size="20.00" fill="#a3a3a3" text-anchor="end" font-weight="400" font-family='&quot;Liberation Sans&quot;, sans-serif'>102.5 MB</text><text x="1443.00" y="359.58" font-size="20.00" fill="#a3a3a3" text-anchor="end" font-weight="400" font-family='&quot;Liberation Sans&quot;, sans-serif'>51.25 MB</text><text x="1443.00" y="403.40" font-size="20.00" fill="#a3a3a3" text-anchor="end" font-weight="400" font-family='&quot;Liberation Sans&quot;, sans-serif'>0 MB</text><rect x="1740" y="456" width="16" height="2.2" fill="#5a8cf7"/><text x="1765.50" y="464.12" font-size="19.20" fill="#333" text-anchor="start" font-weight="400" font-family='&quot;Liberation Sans&quot;, sans-serif'>集合空间</text><rect x="1874" y="456" width="16" height="2.2" fill="#7fd6a5"/><text x="1898.00" y="464.12" font-size="19.20" fill="#333" text-anchor="start" font-weight="400" font-family='&quot;Liberation Sans&quot;, sans-serif'>索引空间</text><rect x="2008" y="456" width="16" height="2.2" fill="#f8cf6e"/><text x="2031.70" y="464.12" font-size="19.20" fill="#333" text-anchor="start" font-weight="400" font-family='&quot;Liberation Sans&quot;, sans-serif'>数据空间</text><rect x="1456.00" y="593.00" width="962.00" height="1.6" fill="#e6e6e6"/><rect x="1456.00" y="636.80" width="962.00" height="1.6" fill="#e6e6e6"/><rect x="1456.00" y="680.60" width="962.00" height="1.6" fill="#e6e6e6"/><rect x="1456.00" y="724.40" width="962.00" height="1.6" fill="#e6e6e6"/><rect x="1456.00" y="622.1" width="25.6" height="146.90" fill="#6fd49a"/><rect x="1488.29" y="622.1" width="25.6" height="146.90" fill="#6fd49a"/><rect x="1520.58" y="622.1" width="25.6" height="146.90" fill="#6fd49a"/><rect x="1552.86" y="622.1" width="25.6" height="146.90" fill="#6fd49a"/><rect x="1585.15" y="622.1" width="25.6" height="146.90" fill="#6fd49a"/><rect x="1617.44" y="622.1" width="25.6" height="146.90" fill="#6fd49a"/><rect x="1649.73" y="622.1" width="25.6" height="146.90" fill="#6fd49a"/><rect x="1714.30" y="622.1" width="25.6" height="146.90" fill="#6fd49a"/><rect x="1746.59" y="622.1" width="25.6" height="146.90" fill="#6fd49a"/><rect x="1778.88" y="622.1" width="25.6" height="146.90" fill="#6fd49a"/><rect x="1811.17" y="622.1" width="25.6" height="146.90" fill="#6fd49a"/><rect x="1843.46" y="622.1" width="25.6" height="146.90" fill="#6fd49a"/><rect x="1875.74" y="622.1" width="25.6" height="146.90" fill="#6fd49a"/><rect x="1940.32" y="622.1" width="25.6" height="146.90" fill="#6fd49a"/><rect x="1972.61" y="622.1" width="25.6" height="146.90" fill="#6fd49a"/><rect x="2037.18" y="622.1" width="25.6" height="146.90" fill="#6fd49a"/><rect x="2069.47" y="622.1" width="25.6" height="146.90" fill="#6fd49a"/><rect x="2101.76" y="622.1" width="25.6" height="146.90" fill="#6fd49a"/><rect x="2166.33" y="622.1" width="25.6" height="146.90" fill="#6fd49a"/><rect x="2198.62" y="622.1" width="25.6" height="146.90" fill="#6fd49a"/><rect x="2230.91" y="622.1" width="25.6" height="146.90" fill="#6fd49a"/><rect x="2295.49" y="622.1" width="25.6" height="146.90" fill="#6fd49a"/><rect x="2392.35" y="622.1" width="25.6" height="146.90" fill="#6fd49a"/><rect x="1456.00" y="768.00" width="962.00" height="2" fill="#cccccc"/><path d="M1468.80 623.93 C1468.80 623.93 1488.17 623.93 1501.09 623.93 C1514.00 623.93 1520.46 623.93 1533.38 623.93 C1546.29 623.93 1552.75 623.93 1565.66 623.93 C1578.58 623.93 1585.04 623.93 1597.95 623.93 C1610.87 623.93 1617.32 623.93 1630.24 623.93 C1643.15 623.93 1657.92 623.93 1662.53 623.93 C1683.75 623.93 1681.90 769.00 1694.82 769.00 C1707.73 769.00 1705.88 623.93 1727.10 623.93 C1731.71 623.93 1746.48 623.93 1759.39 623.93 C1772.31 623.93 1778.76 623.93 1791.68 623.93 C1804.59 623.93 1811.05 623.93 1823.97 623.93 C1836.88 623.93 1843.34 623.93 1856.26 623.93 C1869.17 623.93 1883.93 623.93 1888.54 623.93 C1909.76 623.93 1907.92 769.00 1920.83 769.00 C1933.75 769.00 1931.90 623.93 1953.12 623.93 C1957.73 623.93 1980.80 623.93 1985.41 623.93 C2006.63 623.93 2004.78 769.00 2017.69 769.00 C2030.61 769.00 2028.76 623.93 2049.98 623.93 C2054.59 623.93 2069.36 623.93 2082.27 623.93 C2095.19 623.93 2109.95 623.93 2114.56 623.93 C2135.78 623.93 2133.93 769.00 2146.85 769.00 C2159.76 769.00 2157.91 623.93 2179.13 623.93 C2183.74 623.93 2198.51 623.93 2211.42 623.93 C2224.34 623.93 2239.10 623.93 2243.71 623.93 C2264.93 623.93 2263.08 769.00 2276.00 769.00 C2288.91 769.00 2295.37 623.93 2308.29 623.93 C2321.20 623.93 2319.35 769.00 2340.57 769.00 C2345.18 769.00 2368.25 769.00 2372.86 769.00 C2394.08 769.00 2385.78 636.98 2405.15 623.93" fill="none" stroke="#2f6ef5" stroke-width="3" stroke-linejoin="round"/><rect x="1467.80" y="769.00" width="2" height="8" fill="#cccccc"/><text x="1468.80" y="797.30" font-size="20.00" fill="#a3a3a3" text-anchor="middle" font-weight="400" font-family='&quot;Liberation Sans&quot;, sans-serif'>08–25</text><rect x="1564.66" y="769.00" width="2" height="8" fill="#cccccc"/><text x="1565.66" y="797.30" font-size="20.00" fill="#a3a3a3" text-anchor="middle" font-weight="400" font-family='&quot;Liberation Sans&quot;, sans-serif'>08–28</text><rect x="1661.53" y="769.00" width="2" height="8" fill="#cccccc"/><text x="1662.53" y="797.30" font-size="20.00" fill="#a3a3a3" text-anchor="middle" font-weight="400" font-family='&quot;Liberation Sans&quot;, sans-serif'>08–31</text><rect x="1758.39" y="769.00" width="2" height="8" fill="#cccccc"/><text x="1759.39" y="797.30" font-size="20.00" fill="#a3a3a3" text-anchor="middle" font-weight="400" font-family='&quot;Liberation Sans&quot;, sans-serif'>09–03</text><rect x="1855.26" y="769.00" width="2" height="8" fill="#cccccc"/><text x="1856.26" y="797.30" font-size="20.00" fill="#a3a3a3" text-anchor="middle" font-weight="400" font-family='&quot;Liberation Sans&quot;, sans-serif'>09–06</text><rect x="1952.12" y="769.00" width="2" height="8" fill="#cccccc"/><text x="1953.12" y="797.30" font-size="20.00" fill="#a3a3a3" text-anchor="middle" font-weight="400" font-family='&quot;Liberation Sans&quot;, sans-serif'>09–09</text><rect x="2048.98" y="769.00" width="2" height="8" fill="#cccccc"/><text x="2049.98" y="797.30" font-size="20.00" fill="#a3a3a3" text-anchor="middle" font-weight="400" font-family='&quot;Liberation Sans&quot;, sans-serif'>09–12</text><rect x="2145.85" y="769.00" width="2" height="8" fill="#cccccc"/><text x="2146.85" y="797.30" font-size="20.00" fill="#a3a3a3" text-anchor="middle" font-weight="400" font-family='&quot;Liberation Sans&quot;, sans-serif'>09–15</text><rect x="2242.71" y="769.00" width="2" height="8" fill="#cccccc"/><text x="2243.71" y="797.30" font-size="20.00" fill="#a3a3a3" text-anchor="middle" font-weight="400" font-family='&quot;Liberation Sans&quot;, sans-serif'>09–18</text><rect x="2339.57" y="769.00" width="2" height="8" fill="#cccccc"/><text x="2340.57" y="797.30" font-size="20.00" fill="#a3a3a3" text-anchor="middle" font-weight="400" font-family='&quot;Liberation Sans&quot;, sans-serif'>09–21</text><rect x="2417.00" y="769.00" width="2" height="8" fill="#cccccc"/><text x="2418.00" y="797.30" font-size="20.00" fill="#a3a3a3" text-anchor="middle" font-weight="400" font-family='&quot;Liberation Sans&quot;, sans-serif'>09–23</text><text x="1443.00" y="600.60" font-size="20.00" fill="#a3a3a3" text-anchor="end" font-weight="400" font-family='&quot;Liberation Sans&quot;, sans-serif'>87 MB</text><text x="1443.00" y="644.40" font-size="20.00" fill="#a3a3a3" text-anchor="end" font-weight="400" font-family='&quot;Liberation Sans&quot;, sans-serif'>65.25 MB</text><text x="1443.00" y="688.20" font-size="20.00" fill="#a3a3a3" text-anchor="end" font-weight="400" font-family='&quot;Liberation Sans&quot;, sans-serif'>43.5 MB</text><text x="1443.00" y="732.00" font-size="20.00" fill="#a3a3a3" text-anchor="end" font-weight="400" font-family='&quot;Liberation Sans&quot;, sans-serif'>21.75 MB</text><text x="1443.00" y="775.80" font-size="20.00" fill="#a3a3a3" text-anchor="end" font-weight="400" font-family='&quot;Liberation Sans&quot;, sans-serif'>0 MB</text><text x="2431.20" y="600.60" font-size="20.00" fill="#a3a3a3" text-anchor="start" font-weight="400" font-family='&quot;Liberation Sans&quot;, sans-serif'>279.9k</text><text x="2431.20" y="644.40" font-size="20.00" fill="#a3a3a3" text-anchor="start" font-weight="400" font-family='&quot;Liberation Sans&quot;, sans-serif'>209.9k</text><text x="2431.20" y="688.20" font-size="20.00" fill="#a3a3a3" text-anchor="start" font-weight="400" font-family='&quot;Liberation Sans&quot;, sans-serif'>140.0k</text><text x="2431.20" y="732.00" font-size="20.00" fill="#a3a3a3" text-anchor="start" font-weight="400" font-family='&quot;Liberation Sans&quot;, sans-serif'>70.0k</text><text x="2431.20" y="775.80" font-size="20.00" fill="#a3a3a3" text-anchor="start" font-weight="400" font-family='&quot;Liberation Sans&quot;, sans-serif'>0</text><rect x="1788.3" y="828.5" width="16" height="2.2" fill="#5a8cf7"/><text x="1813.30" y="836.62" font-size="19.20" fill="#333" text-anchor="start" font-weight="400" font-family='&quot;Liberation Sans&quot;, sans-serif'>物理文件大小</text><rect x="1959.4" y="823.4" width="16.3" height="11.7" fill="#6fd49a"/><text x="1984.50" y="836.62" font-size="19.20" fill="#333" text-anchor="start" font-weight="400" font-family='&quot;Liberation Sans&quot;, sans-serif'>集合行数</text><rect x="1290.10" y="890.20" width="3.8" height="3.8" fill="#111"/><rect x="1290.10" y="896.70" width="3.8" height="3.8" fill="#111"/><rect x="1290.10" y="903.10" width="3.8" height="3.8" fill="#111"/><rect x="1290.10" y="909.40" width="3.8" height="3.8" fill="#111"/><rect x="1299.70" y="890.20" width="3.8" height="3.8" fill="#111"/><rect x="1299.70" y="896.70" width="3.8" height="3.8" fill="#111"/><rect x="1299.70" y="903.10" width="3.8" height="3.8" fill="#111"/><rect x="1299.70" y="909.40" width="3.8" height="3.8" fill="#111"/></svg>
</div>
</body></html>
